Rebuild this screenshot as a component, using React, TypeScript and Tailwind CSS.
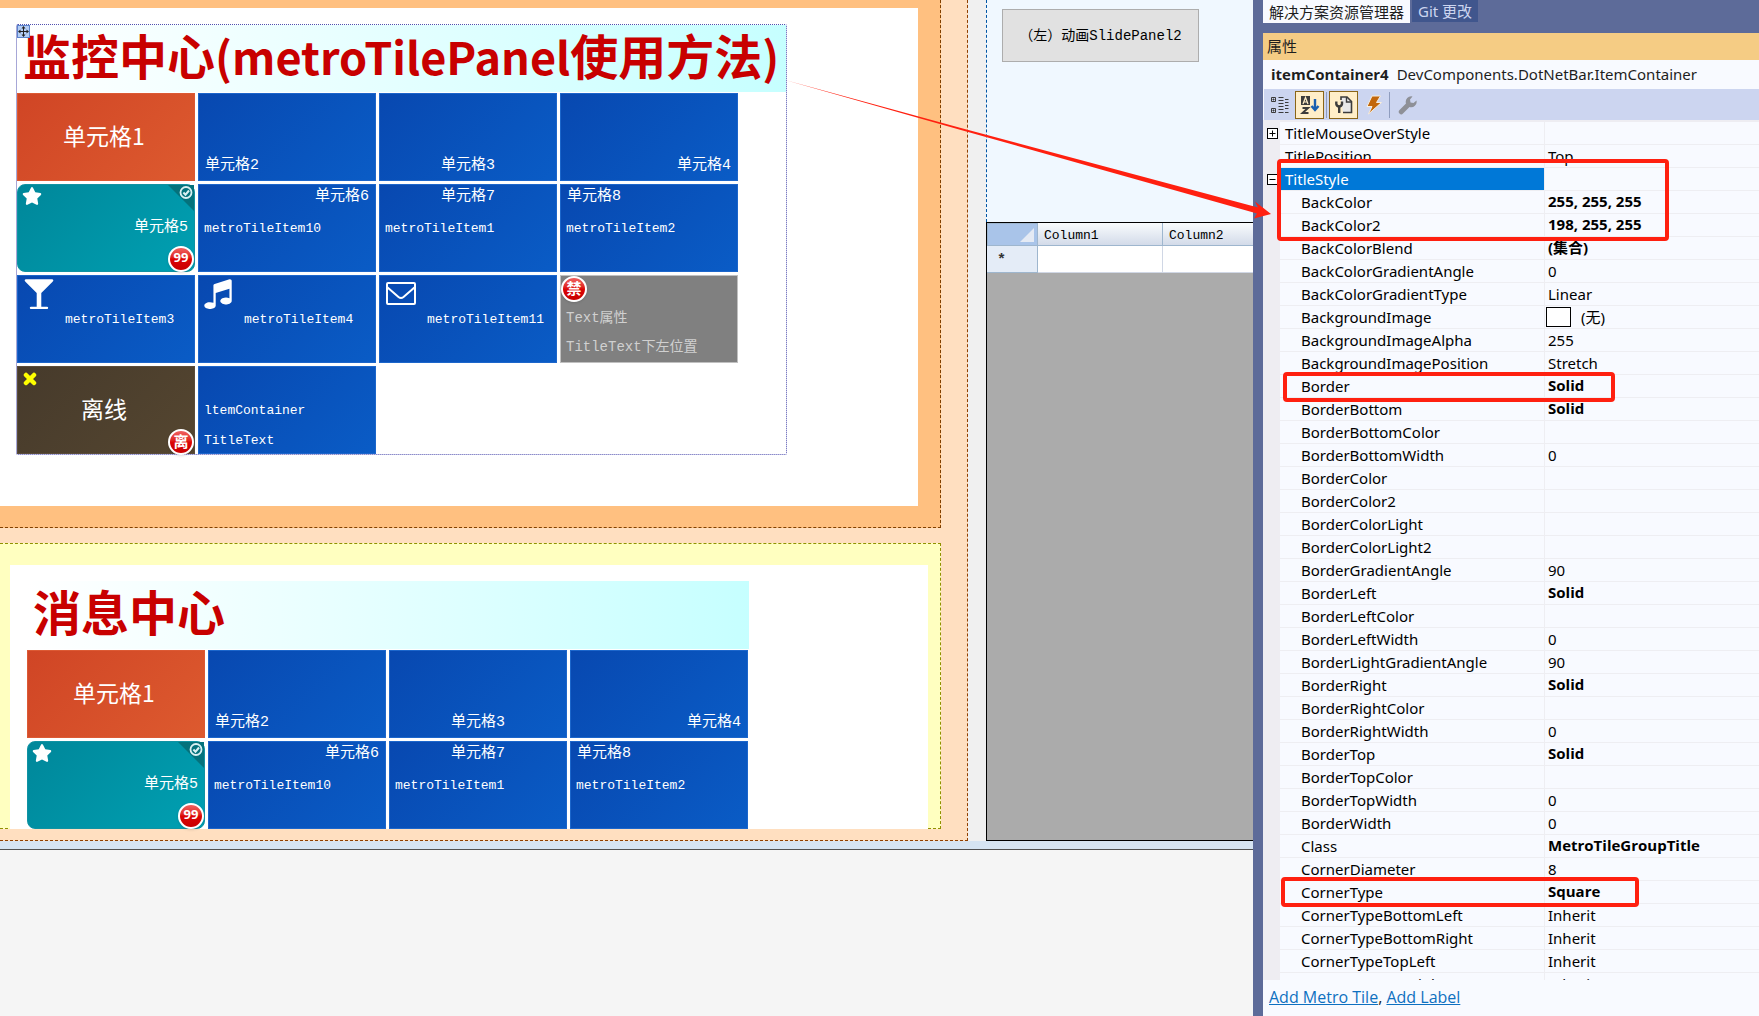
import type { ReactNode } from 'react';
import clsx from 'clsx';
import { FaStar } from 'react-icons/fa';

const properties = [
  { name: 'TitleMouseOverStyle', value: '', toggle: '+' },
  { name: 'TitlePosition', value: 'Top', top: true },
  { name: 'TitleStyle', value: '', toggle: '-', selected: true },
  { name: 'BackColor', value: '255, 255, 255', bold: true },
  { name: 'BackColor2', value: '198, 255, 255', bold: true },
  { name: 'BackColorBlend', value: '(集合)', bold: true },
  { name: 'BackColorGradientAngle', value: '0' },
  { name: 'BackColorGradientType', value: 'Linear' },
  { name: 'BackgroundImage', value: '(无)', swatch: true },
  { name: 'BackgroundImageAlpha', value: '255' },
  { name: 'BackgroundImagePosition', value: 'Stretch' },
  { name: 'Border', value: 'Solid', bold: true },
  { name: 'BorderBottom', value: 'Solid', bold: true },
  { name: 'BorderBottomColor', value: '' },
  { name: 'BorderBottomWidth', value: '0' },
  { name: 'BorderColor', value: '' },
  { name: 'BorderColor2', value: '' },
  { name: 'BorderColorLight', value: '' },
  { name: 'BorderColorLight2', value: '' },
  { name: 'BorderGradientAngle', value: '90' },
  { name: 'BorderLeft', value: 'Solid', bold: true },
  { name: 'BorderLeftColor', value: '' },
  { name: 'BorderLeftWidth', value: '0' },
  { name: 'BorderLightGradientAngle', value: '90' },
  { name: 'BorderRight', value: 'Solid', bold: true },
  { name: 'BorderRightColor', value: '' },
  { name: 'BorderRightWidth', value: '0' },
  { name: 'BorderTop', value: 'Solid', bold: true },
  { name: 'BorderTopColor', value: '' },
  { name: 'BorderTopWidth', value: '0' },
  { name: 'BorderWidth', value: '0' },
  { name: 'Class', value: 'MetroTileGroupTitle', bold: true },
  { name: 'CornerDiameter', value: '8' },
  { name: 'CornerType', value: 'Square', bold: true },
  { name: 'CornerTypeBottomLeft', value: 'Inherit' },
  { name: 'CornerTypeBottomRight', value: 'Inherit' },
  { name: 'CornerTypeTopLeft', value: 'Inherit' },
  { name: 'CornerTypeTopRight', value: 'Inherit' },
];

/* 磁贴颜色 */
const tones = {
  blue: 'bg-linear-135 from-[#0848b0] to-[#0a5cc6] border-[#1c66cb]',
  orange: 'bg-linear-135 from-[#d04525] to-[#dd5a2f] border-[#dc5a34]',
  teal: 'bg-linear-135 from-[#00879a] to-[#00a0b2] border-[#1093a3] rounded-lg',
  brown: 'bg-linear-135 from-[#463a2b] to-[#554630] border-[#5a4c3a]',
  gray: 'bg-[#808080] border-[#c0c0c0]',
};

type TileProps = {
  tone?: keyof typeof tones;
  children?: ReactNode;
};

function Tile({ tone = 'blue', children }: TileProps) {
  return (
    <div
      className={clsx(
        'relative grid h-[88px] w-[178px] border text-white *:[grid-area:1/1] font-["Liberation_Mono","Noto_Sans_CJK_SC",monospace]',
        tones[tone],
      )}
    >
      {children}
    </div>
  );
}

function TileTitle({ className, children }: { className?: string; children: ReactNode }) {
  return <div className={clsx('px-1.5 text-[15px] leading-6', className)}>{children}</div>;
}

function TileText({ className, children }: { className?: string; children: ReactNode }) {
  return <div className={clsx('self-center px-[5px] text-[13px] leading-5', className)}>{children}</div>;
}

function BigText({ children }: { children: ReactNode }) {
  return (
    <div className='self-center justify-self-center pb-1 pr-1 font-["Noto_Sans_CJK_SC",sans-serif] text-[23px] leading-8'>
      {children}
    </div>
  );
}

function Badge({ className, children }: { className: string; children: ReactNode }) {
  return (
    <span
      className={clsx(
        'absolute flex size-[26px] items-center justify-center rounded-full border-2 border-white bg-linear-to-b from-[#f06060] via-[#dc0505] to-[#c80000] pb-0.5 font-["Open_Sans","Noto_Sans_CJK_SC",sans-serif] font-bold text-white shadow',
        className,
      )}
    >
      {children}
    </span>
  );
}

function GlassIcon() {
  return (
    <svg viewBox="0 0 1792 1792" className="ml-[5px] mt-px size-[32px]" fill="currentColor">
      <path d="M1699 186q0 35-43 78l-632 632v768h320q26 0 45 19t19 45-19 45-45 19h-896q-26 0-45-19t-19-45 19-45 45-19h320v-768l-632-632q-43-43-43-78 0-23 18-36.5t38-17.5 43-4h1408q23 0 43 4t38 17.5 18 36.5z" />
    </svg>
  );
}

function MusicIcon() {
  return (
    <svg viewBox="0 0 1792 1792" className="ml-[3px] mt-px size-[32px]" fill="currentColor">
      <path d="M1664 224v1120q0 50-34 89t-86 60.5-103.5 32-96.5 10.5-96.5-10.5-103.5-32-86-60.5-34-89 34-89 86-60.5 103.5-32 96.5-10.5q105 0 192 39v-537l-768 237v709q0 50-34 89t-86 60.5-103.5 32-96.5 10.5-96.5-10.5-103.5-32-86-60.5-34-89 34-89 86-60.5 103.5-32 96.5-10.5q105 0 192 39v-967q0-31 19-56.5t49-35.5l832-256q12-4 28-4 40 0 68 28t28 68z" />
    </svg>
  );
}

function MailIcon() {
  return (
    <svg viewBox="0 0 30 24" className="ml-1.5 mt-1.5 h-6 w-[30px]" fill="none" stroke="currentColor" strokeWidth="2">
      <rect x="1" y="1" width="28" height="21" rx="1" />
      <path d="M1 5 L12.500 15 Q15 17 17.500 15 L29 5" />
    </svg>
  );
}

function CheckedCorner() {
  return (
    <svg viewBox="0 0 26 26" className="self-start justify-self-end size-[26px]">
      <path d="M0 0 H26 V26 Z" fill="#04727c" />
      <circle cx="18" cy="7.500" r="5.500" fill="none" stroke="#d8f0f2" strokeWidth="1.800" />
      <path d="M15.400 7.500 L17.500 9.700 L21 5.500" fill="none" stroke="#d8f0f2" strokeWidth="2" />
    </svg>
  );
}

/* 前两行磁贴，两个面板共用 */
function CommonTiles() {
  return (
    <>
      <Tile tone="orange">
        <BigText>单元格1</BigText>
      </Tile>
      <Tile>
        <TileTitle className="self-end pb-0.5">单元格2</TileTitle>
      </Tile>
      <Tile>
        <TileTitle className="self-end justify-self-center pb-0.5">单元格3</TileTitle>
      </Tile>
      <Tile>
        <TileTitle className="self-end justify-self-end pb-0.5">单元格4</TileTitle>
      </Tile>
      <Tile tone="teal">
        <FaStar className="ml-1 mt-px size-[20px]" />
        <CheckedCorner />
        <TileTitle className="self-center justify-self-end">单元格5</TileTitle>
        <Badge className="bottom-[-1px] right-0 text-[13px]">99</Badge>
      </Tile>
      <Tile>
        <TileTitle className="justify-self-end">单元格6</TileTitle>
        <TileText className="pt-0.5">metroTileItem10</TileText>
      </Tile>
      <Tile>
        <TileTitle className="justify-self-center">单元格7</TileTitle>
        <TileText className="pt-0.5">metroTileItem1</TileText>
      </Tile>
      <Tile>
        <TileTitle>单元格8</TileTitle>
        <TileText className="pt-0.5">metroTileItem2</TileText>
      </Tile>
    </>
  );
}

function PanelTitle({ className, children }: { className: string; children: ReactNode }) {
  return (
    <h2
      className={clsx(
        'mb-px whitespace-nowrap bg-linear-to-r from-white to-[#c6ffff] font-["Noto_Sans_CJK_SC",sans-serif] text-[48px] font-bold leading-[58px] text-[#c80000]',
        className,
      )}
    >
      {children}
    </h2>
  );
}

function MoveHandle() {
  return (
    <svg viewBox="0 0 13 13" className="absolute left-0 top-0 size-[13px]">
      <rect x=".5" y=".5" width="12" height="12" fill="#b4cdf4" stroke="#5b84cc" />
      <path d="M6.500 2 V11 M2 6.500 H11" stroke="#222" />
      <path d="M6.500 1 L8.500 3.500 H4.500Z M6.500 12 L8.500 9.500 H4.500Z M1 6.500 L3.500 4.500 V8.500Z M12 6.500 L9.500 4.500 V8.500Z" fill="#222" />
    </svg>
  );
}

function MonitorPanel() {
  return (
    <section className="mr-[26px] border-b border-r border-dashed border-[#804000] bg-[#ffc080] pb-[21px] pr-[22px] pt-2">
      <div className="bg-white pb-[51px] pl-4 pt-4">
        <div className="relative w-[771px] rounded-xs border border-dotted border-[#5050b0]">
          <PanelTitle className="pb-[9px] pl-1.5">
            监控中心<span className="text-[45px] leading-none">(metroTilePanel</span>使用方法
            <span className="text-[45px] leading-none">)</span>
          </PanelTitle>
          <MoveHandle />
          <div className="flex w-[722px] flex-wrap gap-[3px]">
            <CommonTiles />
            <Tile>
              <GlassIcon />
              <TileText className="ml-[42px] pt-0.5">metroTileItem3</TileText>
            </Tile>
            <Tile>
              <MusicIcon />
              <TileText className="ml-[40px] pt-0.5">metroTileItem4</TileText>
            </Tile>
            <Tile>
              <MailIcon />
              <TileText className="ml-[42px] pt-0.5">metroTileItem11</TileText>
            </Tile>
            <Tile tone="gray">
              <TileText className="pb-0.5 text-[14px] text-[#d0d0d0]">Text属性</TileText>
              <TileText className="self-end pb-[5px] text-[14px] text-[#d0d0d0]">TitleText下左位置</TileText>
              <Badge className="left-0 top-0 text-[15px]">禁</Badge>
            </Tile>
            <Tile tone="brown">
              <svg viewBox="0 0 14 14" className="ml-[5px] mt-[5px] size-3.5" stroke="#ffff00" strokeWidth="4.500" strokeLinecap="round">
                <path d="M3 3 L11 11 M11 3 L3 11" />
              </svg>
              <BigText>离线</BigText>
              <Badge className="bottom-[-2px] right-0 text-[15px]">离</Badge>
            </Tile>
            <Tile>
              <TileText className="pt-0.5">ltemContainer</TileText>
              <TileText className="self-end pb-0.5">TitleText</TileText>
            </Tile>
          </div>
        </div>
      </div>
    </section>
  );
}

function MessagePanel() {
  return (
    <section className="mr-[26px] border-b border-r border-t border-dashed border-[#909000] bg-[#ffffc0] pl-2.5 pr-3 pt-[21px]">
      <div className="relative -mb-px bg-white pl-[17px] pt-4">
        <div className="w-[722px]">
          <PanelTitle className="pb-2.5 pl-1.5">消息中心</PanelTitle>
          <div className="flex flex-wrap gap-[3px]">
            <CommonTiles />
          </div>
        </div>
      </div>
    </section>
  );
}

function SlidePanel() {
  return (
    <div className='flex min-w-0 flex-1 flex-col overflow-hidden bg-[#f0f8ff] font-["Liberation_Mono","Noto_Sans_CJK_SC",monospace]'>
      <div className="h-[222px] border-l border-dashed border-[#0055a5] pl-[15px] pt-[9px]">
        <button type="button" className="h-[53px] w-[197px] whitespace-nowrap border border-[#adadad] bg-[#e1e1e1] pt-0.5 text-[14px] text-black">
          （左）动画SlidePanel2
        </button>
      </div>
      <div className="flex-1 border-b border-l border-t border-black bg-[#ababab]">
        <table className="w-full table-fixed border-separate border-spacing-0 text-[13px]">
          <thead>
            <tr className="h-[23px] text-left leading-[18px]">
              <th className="w-[51px] border border-[#9eb6ce] bg-[#a9c4e9] p-0">
                <svg viewBox="0 0 14 14" className="ml-auto mr-[3px] size-3.5">
                  <path d="M14 0 V14 H0Z" fill="#e4eaf4" />
                </svg>
              </th>
              <th className="w-[125px] border-b border-r border-[#9eb6ce] bg-linear-to-b from-[#f9fcfd] to-[#d3dbe9] px-1.5 pb-0 pt-1 font-normal">
                Column1
              </th>
              <th className="border-b border-[#9eb6ce] bg-linear-to-b from-[#f9fcfd] to-[#d3dbe9] px-1.5 pb-0 pt-1 font-normal">
                Column2
              </th>
            </tr>
          </thead>
          <tbody>
            <tr className="h-[27px]">
              <td className="border-b border-r border-[#9eb6ce] bg-[#e4ecf7] pb-0 pl-2.5 pt-1 text-[15px] font-bold leading-5 text-[#333]">*</td>
              <td className="border-b border-r border-[#d0d7e5] bg-white" />
              <td className="border-b border-[#d0d7e5] bg-white" />
            </tr>
          </tbody>
        </table>
      </div>
    </div>
  );
}

function Toolbar() {
  return (
    <div className="flex h-[31px] items-center border-l border-[#f8f9fe] bg-[#ccd5f0] pl-[5px]">
      <button type="button" aria-label="Categorized" className="mr-1 flex w-[22px] justify-center">
        <svg viewBox="0 0 18 18" className="size-[18px]" fill="none" stroke="#3b3b3b">
          <path d="M.5 1.500h4v4h-4z M.5 12.500h4v4h-4z M2.500 2.500v2 M1.500 3.500h2 M2.500 13.500v2 M1.500 14.500h2" />
          <path d="M7.500 1.500h5 M7.500 4.500h5 M7.500 7.500h5 M7.500 10.500h5 M7.500 13.500h5 M7.500 16.500h5 M14 3.500h3.500 M14 6.500h3.500 M14 9.500h3.500 M14 12.500h3.500 M14 16.500h3.500" />
        </svg>
      </button>
      <button type="button" aria-label="Alphabetical" className="flex h-7 w-[29px] items-center justify-center border border-[#8a6518] bg-[#ffeec8]">
        <svg viewBox="0 0 20 20" className="size-5">
          <rect x="1" y="1" width="9" height="9" fill="#3c3c3c" />
          <path d="M3 9 L5.500 2.500 L8 9 M4 7h3" fill="none" stroke="#ffeec8" strokeWidth="1.200" />
          <path d="M2.500 13 H8 L2.500 18 H8.500" fill="none" stroke="#3c3c3c" strokeWidth="2" />
          <path d="M15 4 V14 M11.500 11 L15 15 L18.500 11" fill="none" stroke="#1a5fb0" strokeWidth="2.400" />
        </svg>
      </button>
      <span className="mx-[2px] h-[26px] w-px bg-[#8f9dbf]" />
      <button type="button" aria-label="Properties" className="flex h-7 w-[29px] items-center justify-center border border-[#8a6518] bg-[#ffeec8]">
        <svg viewBox="0 0 20 20" className="size-5" fill="none" stroke="#3c3c3c">
          <path d="M7 5 V2 H13 L17.500 6.500 V17.500 H9" strokeWidth="1.600" fill="#e8e8e8" />
          <path d="M12.500 2 V7 H17.500" strokeWidth="1.400" />
          <path d="M2.300 6.500 V9 A2.900 2.900 0 0 0 8 9 V6.500 M5.200 11 V18" strokeWidth="2.400" />
        </svg>
      </button>
      <button type="button" aria-label="Events" className="flex w-[31px] justify-center">
        <svg viewBox="0 0 18 20" className="h-5 w-[18px]">
          <path d="M7 1 H15.500 L11.500 7.500 H16.500 L3.500 19 L7 11.500 H2 Z" fill="#c2670c" stroke="#f7efe0" />
        </svg>
      </button>
      <span className="mr-2 h-[26px] w-px bg-[#8f9dbf]" />
      <button type="button" aria-label="Property pages" disabled>
        <svg viewBox="0 0 20 20" className="size-5">
          <path d="M18.500 5.500 L15.500 8 L12.500 7.500 L12 4.500 L14.500 1.500 A5.500 5.500 0 0 0 8 8.500 L1.500 15 A2.300 2.300 0 0 0 5 18.500 L11.500 12 A5.500 5.500 0 0 0 18.500 5.500Z" fill="#8e9097" />
        </svg>
      </button>
    </div>
  );
}

function PropertyGrid() {
  return (
    <div className="relative min-h-0 flex-1 overflow-hidden border-t-2 border-[#eeedf2]">
      <table className="w-full table-fixed border-separate border-spacing-0 leading-[22px] text-black">
        <colgroup>
          <col className="w-[17px]" />
          <col className="w-[265px]" />
          <col />
        </colgroup>
        <tbody>
          {properties.map((p) => (
            <tr key={p.name} className="h-[23px]">
              <td className="bg-[#eeedf2] p-0">
                {p.toggle && (
                  <button type="button" aria-label={`Toggle ${p.name}`} className="ml-1 block">
                    <svg viewBox="0 0 11 11" className="size-[11px]" fill="#fff" stroke="#000">
                      <rect x=".5" y=".5" width="10" height="10" />
                      <path d={p.toggle === '+' ? 'M2.500 5.500h6 M5.500 2.500v6' : 'M2.500 5.500h6'} />
                    </svg>
                  </button>
                )}
              </td>
              <td
                className={clsx(
                  'whitespace-nowrap border-b border-r border-[#eeeef2] py-0 pr-0',
                  p.toggle || p.top ? 'pl-[5px]' : 'pl-[21px]',
                  p.selected && 'bg-[#0078d7] text-white',
                )}
              >
                {p.name}
              </td>
              <td
                className={clsx(
                  'whitespace-nowrap border-b border-[#eeeef2] py-0 pl-[3px] pr-0',
                  p.bold && 'pb-0.5 font-["Open_Sans","Noto_Sans_CJK_SC",sans-serif] font-bold leading-5',
                )}
              >
                {p.swatch ? (
                  <span className="-ml-0.5 flex items-center gap-2.5">
                    <span className="h-5 w-[25px] border border-black bg-white" />
                    {p.value}
                  </span>
                ) : (
                  p.value
                )}
              </td>
            </tr>
          ))}
        </tbody>
      </table>

      {/* 红框标注 */}
      <div className="absolute left-[14px] top-[37px] h-[82px] w-[392px] rounded border-4 border-[#ff2010]" />
      <div className="absolute left-[20px] top-[250px] h-[30px] w-[332px] rounded border-4 border-[#ff2010]" />
      <div className="absolute left-[18px] top-[755px] h-[30px] w-[358px] rounded border-4 border-[#ff2010]" />
    </div>
  );
}

function PropertiesWindow() {
  return (
    <aside className='flex h-full w-[506px] shrink-0 flex-col border-l-10 border-[#5d6b99] bg-[#f8faff] font-["Noto_Sans","Noto_Sans_CJK_SC",sans-serif] text-[15px]'>
      <div className="flex h-[33px] items-start gap-0.5 bg-[#5d6b99]">
        <button type="button" className="h-[23px] bg-[#f8faff] px-1.5 leading-[22px] text-[#1e1e1e]">
          解决方案资源管理器
        </button>
        <button type="button" className="h-[22px] bg-[#40568d] px-1.5 leading-[22px] text-[#ccd5f0]">
          Git 更改
        </button>
      </div>
      <h3 className="h-[27px] bg-[#f5cc84] pl-1 leading-[27px] text-[#1e1e1e]">属性</h3>
      <div className="flex h-[29px] items-center gap-2 pl-2 text-[#1e1e1e]">
        <strong className='font-["Open_Sans",sans-serif]'>itemContainer4</strong>
        <span>DevComponents.DotNetBar.ItemContainer</span>
      </div>
      <Toolbar />
      <PropertyGrid />
      <div className='h-9 pl-1.5 font-["Open_Sans",sans-serif] text-base leading-[34px] text-[#1e1e1e]'>
        <a href="#tile" className="text-[#0e70c0] underline">Add Metro Tile</a>,{' '}
        <a href="#label" className="text-[#0e70c0] underline">Add Label</a>
      </div>
    </aside>
  );
}

export default function App() {
  return (
    <div className="relative flex h-screen overflow-hidden bg-[#f5f5f5]">
      <main className="min-w-0 flex-1 overflow-hidden">
        <div className="flex bg-[#f0f0f0]">
          <div className="flex w-[968px] shrink-0 flex-col gap-[15px] border-b border-r border-dashed border-[#904000] bg-[#ffdfc0] pb-[11px]">
            <MonitorPanel />
            <MessagePanel />
          </div>
          <div className="w-[18px] shrink-0" />
          <SlidePanel />
        </div>
        <div className="h-[9px] border-b border-[#505050] bg-[#d6e4f2]" />
      </main>
      <PropertiesWindow />

      {/* 标注箭头 */}
      <svg className="pointer-events-none absolute left-[785px] top-[79px] h-[140px] w-[488px]" viewBox="785 79 488 140">
        <path d="M785 80 L960 127.700 L1258 207.500 L1255 201.500 L1271 214 L1254 218.500 L1257 213.500 L960 129.700 Z" fill="#ff2010" />
      </svg>
    </div>
  );
}
